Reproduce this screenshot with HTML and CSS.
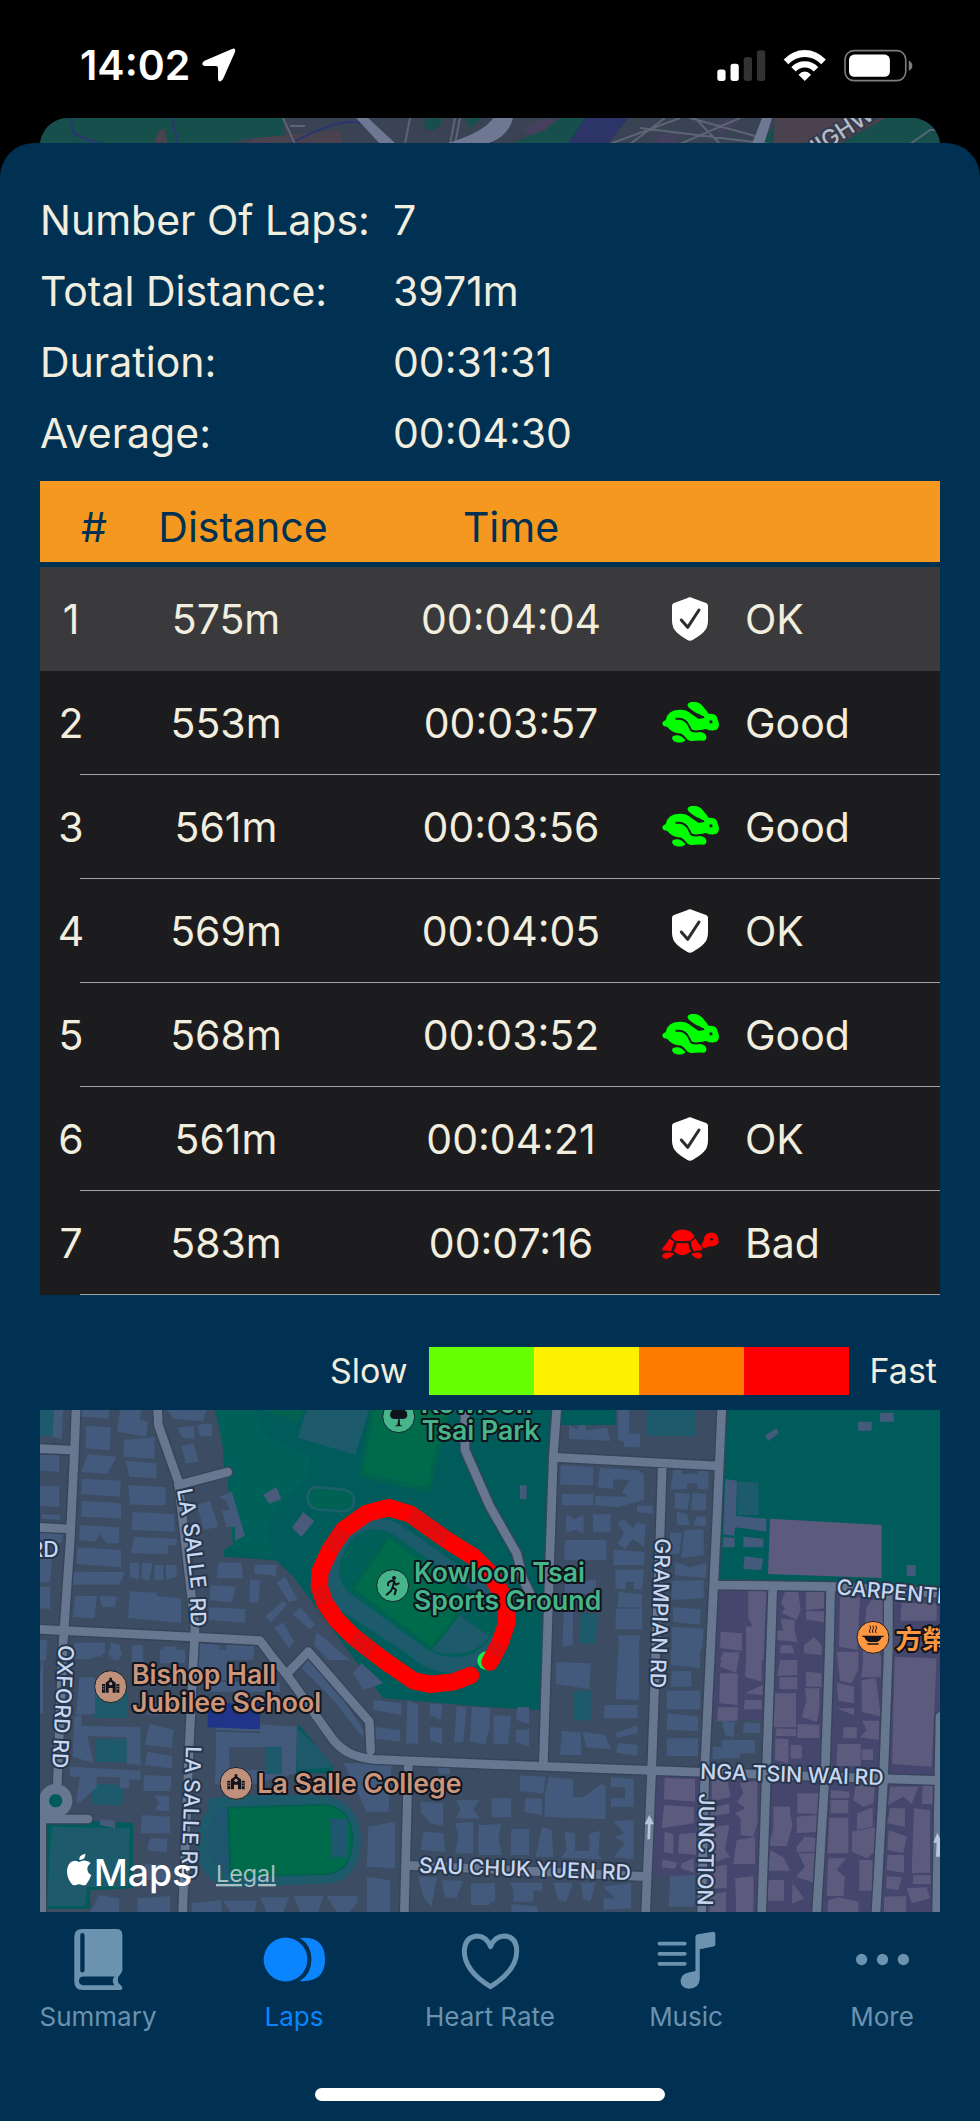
FILE: index.html
```html
<!DOCTYPE html>
<html lang="en">
<head>
<meta charset="utf-8">
<meta name="viewport" content="width=device-width, initial-scale=1">
<title>Laps</title>
<link rel="stylesheet" href="styles.css">
</head>
<body>
<svg class="sprite" aria-hidden="true">
  <symbol id="shield" viewBox="214 112 112 132">
    <path fill="#fff" d="M270 113Q274 113 279 116L318 130Q324 132 324 139V184Q324 206 308 220Q297 230 279 240Q270 246 261 240Q243 230 232 220Q216 206 216 184V139Q216 132 222 130L261 116Q266 113 270 113Z"/>
    <path class="tick" d="M244 181L263 203L297 151"/>
  </symbol>
  <symbol id="hare" viewBox="186 424 176 128">
    <path fill="#0f0" d="M190 488Q190 480 200 478Q206 448 240 447Q262 446 280 460L300 472Q308 474 312 468Q306 462 290 456Q264 440 265 432Q268 423 284 423Q302 424 314 440Q322 450 328 459Q340 458 348 463Q354 468 356 479Q360 486 358 496Q356 508 344 508Q332 510 322 505Q314 502 308 509Q298 512 290 512Q306 512 316 518Q324 526 320 536Q316 541 304 539L276 540Q268 540 264 535Q256 524 246 518Q226 518 212 506Q206 496 196 496Q190 494 190 488Z"/>
    <path fill="#0f0" d="M219 530Q222 522 236 523Q248 524 259 538Q254 545 238 545Q219 543 219 530Z"/>
    <path class="cut" d="M232 474Q252 472 263 485Q270 494 275 507Q280 513 296 511L308 510M264 447L298 471L312 469"/>
    <circle cx="335" cy="483" r="5" fill="#1c1c1e"/>
  </symbol>
  <symbol id="tortoise" viewBox="186 734 176 128">
    <path fill="#f00" d="M216 778Q226 756 250 756Q276 756 286 778L274 790Q250 792 228 790ZM211 783L226 793Q220 806 216 822Q206 818 190 819Q188 814 194 808Q204 798 211 783ZM233 796Q250 799 267 796Q268 812 276 822L260 831Q250 834 240 831L224 822Q231 810 233 796ZM289 782L275 793Q276 810 284 822Q294 818 306 819Q312 814 306 806Q296 796 289 782ZM190 833Q196 824 210 825Q222 826 224 830Q214 842 202 844Q188 842 190 833ZM276 830Q284 824 296 825Q309 826 309 834Q308 844 298 843Q286 842 276 830ZM307 798Q312 796 314 786Q316 766 336 765Q352 766 357 782Q360 798 352 802Q344 808 334 806Q324 806 314 814Q308 808 307 798Z"/>
    <circle cx="337" cy="785" r="4" fill="#1c1c1e"/>
  </symbol>
  <symbol id="school" viewBox="-50 -50 100 100">
    <circle r="48" fill="#c0917a" stroke="#17202c" stroke-width="3"/>
    <path fill="#10131b" d="M-15 18V-12L-4 -20V-27H4V-20L15 -12V18H6V4H-6V18ZM-26 -8H-17V18H-26ZM17 -8H26V18H17Z"/>
    <circle cy="-9" r="5" fill="#c0917a"/>
    <path stroke="#c0917a" stroke-width="3" d="M-24 -1H-19M-24 7H-19M19 -1H24M19 7H24"/>
  </symbol>
</svg>

<header class="status">
  <div class="clock">
    <time>14:02</time>
    <svg class="arrow" viewBox="0 0 34 34" role="img" aria-label="Location in use"><path d="M30 1Q34 -1 33 4L21 31Q17 36 16 31V20Q16 18 14 18H3Q-2 17 2 13Z"/></svg>
  </div>
  <svg class="signals" viewBox="50 36 594 100" role="img" aria-label="Signal, Wi-Fi and battery">
    <rect x="51" y="98" width="25" height="35" rx="8" fill="#fff"/>
    <rect x="91" y="81" width="25" height="52" rx="8" fill="#fff"/>
    <rect x="131" y="60" width="25" height="73" rx="8" fill="#333"/>
    <rect x="171" y="40" width="25" height="93" rx="8" fill="#333"/>
    <path fill="#fff" d="M252 68Q280 39 316 39T380 68L366 82Q344 60 316 60T266 82ZM275 91Q292 73 316 73T357 91L343 104Q332 92 316 92T289 104ZM297 114Q306 104 316 104T335 114L316 133Z"/>
    <rect x="438" y="41" width="184" height="91" rx="27" fill="none" stroke="#7c7c7c" stroke-width="5"/>
    <rect x="450" y="53" width="124" height="67" rx="16" fill="#fff"/>
    <path fill="#7c7c7c" d="M631 71Q642 76 642 87T631 102Z"/>
  </svg>
</header>

<div class="peek">
  <svg viewBox="0 0 900 26" preserveAspectRatio="xMidYMin slice" aria-hidden="true">
    <path fill="#174f4d" d="M0 0H900V26H0Z"/>
    <path fill="#3a4354" d="M243 0H520L505 12 490 18 470 26H190L205 20 245 22ZM590 0H740L720 26H560Z"/>
    <path fill="#174f4d" d="M386 0H402L400 8 392 13 384 10ZM425 0H442L430 10Z"/>
    <path fill="#4a424f" d="M118 14L124 10 128 26H114ZM215 20L300 12 302 26H205ZM735 0H846L820 14 800 26H733Z"/>
    <path fill="#45405e" d="M482 12L500 2 518 0 505 12 490 16ZM620 17L640 14 634 26H615ZM672 8L690 0 695 6 680 16Z"/>
    <path fill="#2c3468" d="M545 0H588L568 26H528Z"/>
    <path fill="none" stroke="#2a3572" stroke-width="2" d="M30 0L34 16 60 26M132 0L138 26M250 26Q290 4 312 4T340 26"/>
    <path fill="none" stroke="#5d6474" stroke-width="2" d="M243 0L255 26M250 8H265M370 0L365 26M415 0L410 26M420 0L415 26M640 0L570 26M655 0L680 26M700 0L640 26M590 26L625 0M600 10L730 26M650 0L715 18M870 26L890 12H900"/>
    <path fill="#6e7892" d="M316 0H328L356 26H340ZM453 0H473Q468 20 446 26H405Q445 14 453 0ZM722 0H732L724 26H712Z"/>
    <text class="peek-road" x="768" y="44" transform="rotate(-33 768 44)">HIGHWAY</text>
  </svg>
</div>

<main class="sheet">
  <dl class="summary">
    <dt>Number Of Laps:</dt><dd>7</dd>
    <dt>Total Distance:</dt><dd>3971m</dd>
    <dt>Duration:</dt><dd>00:31:31</dd>
    <dt>Average:</dt><dd>00:04:30</dd>
  </dl>

  <table class="laps">
    <colgroup><col class="c-num"><col class="c-dist"><col class="c-time"><col class="c-icon"><col></colgroup>
    <thead>
      <tr><th scope="col">#</th><th scope="col">Distance</th><th scope="col">Time</th><th></th><th></th></tr>
    </thead>
    <tbody>
      <tr class="selected"><td>1</td><td>575m</td><td>00:04:04</td><td><svg class="shield"><use href="#shield"/></svg></td><td>OK</td></tr>
      <tr><td>2</td><td>553m</td><td>00:03:57</td><td><svg class="animal"><use href="#hare"/></svg></td><td>Good</td></tr>
      <tr><td>3</td><td>561m</td><td>00:03:56</td><td><svg class="animal"><use href="#hare"/></svg></td><td>Good</td></tr>
      <tr><td>4</td><td>569m</td><td>00:04:05</td><td><svg class="shield"><use href="#shield"/></svg></td><td>OK</td></tr>
      <tr><td>5</td><td>568m</td><td>00:03:52</td><td><svg class="animal"><use href="#hare"/></svg></td><td>Good</td></tr>
      <tr><td>6</td><td>561m</td><td>00:04:21</td><td><svg class="shield"><use href="#shield"/></svg></td><td>OK</td></tr>
      <tr><td>7</td><td>583m</td><td>00:07:16</td><td><svg class="animal"><use href="#tortoise"/></svg></td><td>Bad</td></tr>
    </tbody>
  </table>

  <div class="legend">
    <span>Slow</span>
    <div class="scale"><i class="s1"></i><i class="s2"></i><i class="s3"></i><i class="s4"></i></div>
    <span>Fast</span>
  </div>

  <div class="map">
    <svg viewBox="0 0 2700 1506" role="img" aria-label="Map of the route around Kowloon Tsai Sports Ground">
      <path fill="#3b4c63" d="M0 0H2700V1506H0Z"/>
      <path fill="#45466d" d="M2000 530H2700V1506H1985V1400H1840V1085H2000Z"/>
      <path fill="#3b4c63" d="M2012 930H2190V1082H2012Z"/>
      <!-- parks -->
      <path fill="#005c5a" d="M525 0L548 100 552 170 572 200 615 380 552 420V440L670 448 710 452 760 500 900 690 1030 865 1350 892 1500 900 1520 430 1540 140 1550 0ZM2050 0H2700V545L2040 520ZM1565 0H1727V45H1562Z"/>
      <g transform="translate(-120 -60)">
        <path fill="#00615a" d="M650 60H760L800 140 930 200 925 260 830 350 800 420 820 500 700 480 680 240Z"/>
        <path fill="#00624f" d="M790 60H910L893 96ZM1110 60H1350L1290 308 1077 262Z"/>
        <path fill="#006b4a" d="M1125 60H1335L1280 292 1090 246Z"/>
        <path fill="#1d5a6c" d="M920 60H1106L1066 195 893 143ZM120 60H162V137H120Z"/>
        <path fill="#006252" stroke="#1d5f6b" stroke-width="7" d="M950 291L1035 300Q1062 306 1062 334Q1060 364 1025 364L950 358Q922 350 922 324Q924 292 950 291Z"/>
        <path fill="#1d5a6c" d="M1090 386Q1160 376 1210 410L1540 640Q1560 700 1490 770Q1440 830 1370 850Q1280 850 1220 790L1020 660Q975 610 985 530Q1000 420 1090 386Z"/>
        <path fill="#005f59" d="M1100 420Q1150 410 1190 440L1500 660Q1500 740 1420 790Q1340 820 1270 770L1050 610Q1010 580 1020 520Q1040 440 1100 420Z"/>
        <path fill="#1d5a6c" d="M1370 670L1470 740Q1420 800 1330 790L1290 780Z"/>
        <path fill="#006b4a" stroke="#00614f" stroke-width="10" d="M1165 440L1370 585V680L1294 775 1056 596Z"/>
        <path fill="#4a5a7a" d="M790 314L829 292 844 327 808 341ZM910 366L943 394 904 440 876 413Z"/>
      </g>
      <g transform="translate(-120 720)">
        <path fill="#005c5a" d="M135 515L270 512 399 520 398 715 271 720 270 776H122ZM895 222L1000 350 995 370H885Z"/>
        <path fill="#1d5a6c" d="M155 530L390 535 385 710 262 712 255 768H140ZM280 120H384V204H280ZM287 268H382V336H287ZM275 400L370 406 366 468 273 462ZM795 290H846V372H795ZM888 232L960 300 1000 352 890 360Z"/>
        <path fill="#1d5a6c" d="M625 445Q820 425 990 440Q1083 470 1083 570Q1080 690 985 700L700 712Q590 700 592 580Q594 510 625 480Z"/>
        <path fill="#205570" d="M660 475Q615 530 628 600Q640 660 690 680V480Z"/>
        <path fill="#006b4a" stroke="#00604f" stroke-width="6" d="M684 474L980 464Q1057 480 1057 570Q1055 660 985 672L692 680Z"/>
        <path fill="#1f5770" d="M990 506H1042V622H995Z"/>
      </g>
      <g fill="#1d5a6c">
        <path d="M1820 0H1967V77H1820ZM2092 215L2156 217V315H2092ZM1622 610L1672 612 1668 702 1618 698ZM1602 842H1652V931H1602Z"/>
      </g>
      <!-- buildings, north-west -->
      <g class="blue" transform="translate(-120 -60)">
        <path d="M162 60H190L185 147 158 140ZM246 60H328L326 86 246 80ZM258 107L332 112 330 180 257 175ZM360 60H424L420 90 444 95 438 140 351 125ZM372 150L464 140 463 206 370 200ZM262 193L350 200 322 252 244 246ZM377 212L470 220 469 265 388 260ZM246 266L363 272 360 320 244 312ZM384 285L497 292V346L390 344ZM245 332L363 340V385L244 380ZM397 366L523 372V425L396 420ZM240 405L358 412 356 460H320L298 432 288 455 238 450ZM403 440L530 446V465H505L502 492L392 490ZM232 472L363 480V532L230 522ZM218 545L376 546 358 584H218ZM390 518H417V570L390 562ZM426 518L457 520 448 572 424 565ZM464 525H490V570H462ZM498 525H530V560L498 570ZM390 604L470 608V618L543 625V698L384 684ZM226 617L291 618 284 685 218 680ZM298 617L351 620 344 652 305 650ZM120 195H178V247L120 241ZM120 288H178V352L120 347ZM126 372L180 375V390L126 386ZM120 425L190 430 185 460H120ZM120 506H157L150 577H120ZM120 590H151V658L120 655ZM502 60H620L610 94 520 86ZM532 112L583 108V147L548 145ZM592 104L637 100 635 138 600 137ZM543 168L580 160 596 215 558 220ZM590 344L630 332 655 410 612 420ZM658 320L695 305 735 437 705 452V410L680 412 665 362 690 360 680 334ZM655 518H724L730 565H650ZM764 524H830L828 558 762 550ZM750 568L782 572 774 640 748 636ZM632 585L708 590 695 638 630 630ZM626 652L736 657V698L624 690ZM830 578L855 560 893 630 866 636ZM797 678L850 632 860 645 812 698ZM878 672L902 652 946 705 928 718ZM823 712L850 697 882 755 866 775ZM222 758H315V790L270 808H222ZM330 758L362 765 358 810H335ZM396 765H428V810H400ZM490 770H530V810H488ZM595 760L660 765 650 810H600ZM680 765L764 758 760 810H670ZM950 725L1050 810H985L942 765ZM120 750H143L138 810H120Z"/>
      </g>
      <!-- buildings, north-east -->
      <g class="blue" transform="translate(1350 -60)">
        <path d="M384 60H417V130L450 132V172L402 170V155L384 150ZM237 106L264 118V106H288V122L350 112 362 153 237 146ZM212 226L309 232V286L210 284ZM330 233L440 240 462 252V330L380 352 316 345V318L415 320 395 306 420 270 370 268V298L323 292ZM216 312H310V346H216ZM441 346L488 348V372L441 366ZM228 373L255 388 281 373V432L258 420 228 427ZM309 373H362V427H309ZM382 400L400 388 430 415 440 398 468 402 462 470 428 446 406 476 382 462 402 428ZM225 450H349V510H222ZM370 478L463 486V525H370ZM376 540L462 538 456 598H432V576H407V600L376 595ZM385 606L456 612V652H384ZM378 656H457V718H376ZM384 736H450L444 800H388ZM225 575L318 570V600L285 612 250 616 248 765 217 770ZM550 236H575V252H622V236H655V298H622V280H592V298H542ZM555 308L600 312 592 360 555 355ZM608 308L648 312V360H602ZM560 366L590 372 600 405 562 405ZM620 378L648 380V410L610 404ZM540 426L575 430 568 492H538ZM582 420L641 418V496L575 504ZM555 515L600 532 648 518V564L555 556ZM548 572L641 570V625L543 630ZM548 652L633 658 630 704 550 696ZM545 710L641 716 635 780H545ZM90 286H110V327H90ZM826 136L860 115 866 130 834 154ZM1104 95H1145V122H1104ZM1170 68H1211V95H1170ZM706 267L741 272 738 378 829 386V425L736 412 732 437 700 433ZM700 440L734 445V472H698ZM760 440L820 446V472H760ZM764 498L820 506 814 540 760 537ZM1250 525H1277V558H1250Z"/>
      </g>
      <g class="plum" transform="translate(1350 -60)">
        <path d="M840 386L1175 405V564L834 552ZM775 598H830L826 672 820 810H768V710L788 708 775 685ZM692 725L756 730V782L690 774ZM698 790L748 785 745 810H690ZM885 606H925L932 660 920 690 875 668 885 655 873 640ZM948 606H1002V655L948 660ZM948 664H1002V697L948 688ZM872 686L914 690V722L922 756 862 750V722H880ZM972 742L995 765V795L942 790V766ZM872 766H905L914 790H870ZM1050 622H1110L1102 780 1047 770ZM1130 650L1145 630H1180V720L1125 700ZM1234 640H1340V692H1232ZM1120 740H1170V810H1118Z"/>
      </g>
      <!-- buildings, south-west -->
      <g class="blue" transform="translate(-120 720)">
        <path d="M120 70L130 0V190H120ZM225 0H310L305 20 230 15ZM238 82H285V192L228 195ZM222 200L245 195V228L422 232V345L380 342V262L262 258 282 340 218 320ZM210 350L422 362V390L388 388V415H360V382L290 380V412L235 462 228 455 240 380H210ZM325 0H365V20H325ZM395 0H430V35L395 50ZM480 0H555V40H480ZM620 95L840 98V125H625ZM440 160H530V195H440ZM448 222L522 240 515 294 435 284ZM442 305L516 318V356L434 345ZM432 375L515 378 510 423H430ZM462 436L508 438V484L462 480 478 460ZM425 495L510 500V550H422ZM455 564L503 566 500 608 442 600 445 575ZM435 640L503 650V690H430ZM412 745L510 738V788H412ZM298 735L358 745V786H270ZM300 508L346 512 345 534 300 526ZM600 285H648V215L890 230 888 370 690 420 645 400 648 285ZM580 0H680V90H580Z"/>
        <path fill="#3b4c63" d="M688 292H795V360H688ZM614 238L780 244V250L614 244Z"/>
        <path fill="#20348a" d="M623 160H780V238L623 232Z"/>
        <path fill="#1d5a6c" d="M795 290H846V372H795Z"/>
        <path d="M1085 40L1150 100 1090 120 1060 70ZM925 30L985 80 1030 150 1090 240V265L1000 150 905 55ZM1030 338L1175 345 1165 485H1100ZM1120 150L1205 160V195L1120 180ZM1125 230L1200 240V275L1110 265ZM1222 150L1255 165V280L1218 282ZM1290 160L1328 165 1322 210 1290 195ZM1290 230L1326 235V282L1290 270ZM1370 168L1400 172 1390 275 1362 278ZM1415 170L1470 175V230L1455 282 1410 275ZM1105 530L1185 515V655L1100 650ZM1100 680L1170 690V786H1100ZM1262 455L1330 460V528L1290 520 1262 485ZM1368 450H1438L1420 478 1440 505H1368L1382 478ZM1270 545L1330 550 1336 605 1262 600ZM1365 520L1420 516V608L1365 612 1375 560ZM1435 525H1470V615H1435ZM1255 680H1310L1295 770 1270 740ZM1325 690L1388 692 1370 745 1335 740ZM1412 700H1470V765H1412ZM575 760L665 750V786H575ZM670 752H770L765 786H690ZM780 742H868L850 786H800ZM880 738H970L955 786H900ZM980 738H1073V755L1050 786H1010ZM1315 345H1350V372H1315Z"/>
      </g>
      <!-- buildings, south-east -->
      <g class="blue" transform="translate(1350 720)">
        <path d="M10 196L63 198 55 282H10ZM82 170L117 172V222L78 210ZM78 240L117 238V290L76 275ZM198 37L303 40 298 118 197 102ZM385 0H448V150L376 148ZM344 165H443V204H342ZM216 242L272 248 275 316 210 314ZM278 245L345 255 364 298 288 292ZM376 250L443 225V250L380 264ZM384 278L443 285V318L378 308ZM543 0H630V55L543 45ZM545 63H604V110H543ZM530 122H630V178H530ZM532 190L624 200V243L530 240ZM530 265H624V318H530ZM695 212L735 215 730 262 705 255ZM765 216L810 220V250L757 248ZM695 270H795V310H750V325H695ZM668 290H694V328H668ZM90 376L167 380 160 430 90 424ZM176 380L249 388V440L280 442 335 402 347 410V508L163 500 165 430ZM5 445H63V502H5ZM108 444L156 446V495L102 485ZM363 382L431 388V470H363V445H405V412H363ZM0 523H36L25 560 36 615H0ZM64 537H117V615H62ZM156 530L185 540 190 622 137 620ZM223 543L256 550V603H298V550L330 543 325 610 334 628 212 624 230 600ZM370 512L431 510V628L370 622 405 578 372 562 402 550ZM60 698H156V722H130V755H70V720ZM190 698H250L228 755 205 750ZM272 698H316L302 755 280 748ZM338 710L423 698V775L340 780V745H375ZM64 762L142 770V786H64ZM0 698H15V755H0ZM540 678L615 675V770H536Z"/>
      </g>
      <g class="plum" transform="translate(1350 720)">
        <path d="M700 5L748 12 738 68 690 50ZM770 0H815V95L765 80ZM690 70H743V165L688 160ZM765 130L818 104V136ZM764 150H815V178H762ZM684 172H743V212H682ZM870 30H922V75L862 78ZM868 82H922V118H868ZM948 65L995 70V110H948ZM945 115H988V180L980 216 935 200 950 150ZM855 130H918V232H850ZM860 235L918 238V258H856ZM922 222L988 225V264H922ZM856 265L895 268V340L855 330ZM902 285H935V326H902ZM1040 5H1105V60L1085 100 1050 92ZM1120 30L1173 15V82H1113ZM1040 98L1092 110V160L1045 152ZM1115 90L1158 85 1172 200 1115 185ZM1040 175H1092V196ZM1060 232H1100V265H1060ZM1116 212H1167V270L1110 262 1130 240ZM1042 282H1112V348H1040ZM1115 298H1149V330H1115ZM1214 20L1340 25 1325 350 1206 342ZM524 384L615 388V455L522 448ZM522 465L612 472V520L515 535ZM524 545L550 552V612L522 605ZM568 552L618 548V615L564 610ZM518 628L562 638 555 656 515 652ZM575 640L612 625V668L572 655ZM665 390H712L722 440 665 455ZM750 400L802 392V520L790 560 752 555V505L735 490 765 475 742 455 760 430ZM665 475L718 460V490L660 500ZM665 530L718 525 705 600 720 620 665 640ZM740 570L795 562V642H730ZM670 650L710 645V715H670ZM735 685L790 678V786H738V745ZM660 735L708 725V786H658ZM850 470H900V490L908 525 890 588H835L850 540ZM922 430H988V492L922 490ZM920 500L980 495 985 545 920 550ZM945 560L988 565V605H920V590ZM840 600L880 622 900 662H835ZM925 610H975V700L918 680 945 650ZM835 690H882V752H832ZM908 700L942 745 905 762ZM1022 420L1078 425V445H1022ZM1022 450H1075V490H1022ZM1018 503H1075V610H1012ZM1098 402L1154 410 1150 460 1120 470 1090 450ZM1102 490L1148 472V530L1100 540ZM1086 545L1160 530 1155 605 1130 625 1086 605ZM1015 625H1068L1040 660 1065 680 1060 738H1010ZM1108 630H1148V722H1108ZM1015 750L1045 742 1105 755V786H1012ZM1200 410H1285L1265 462 1240 440 1195 465ZM1298 402H1328V462H1296ZM1200 475H1245V530L1192 520ZM1272 475L1320 480V668L1265 670ZM1196 540L1250 560 1240 608 1192 600ZM1192 615H1242V668L1190 660ZM1270 676H1322V702H1268ZM1190 678L1235 682 1225 720 1188 715ZM1250 715L1310 712 1320 745 1265 760ZM1182 740L1248 738V786H1182Z"/>
      </g>
      <!-- streets -->
      <g class="street-edge">
        <path id="streets" d="M108 0L103 130 90 400 68 720 52 1120M0 116L95 120M0 352L90 357M0 658L400 678 660 692 700 745 745 800 880 990Q905 1018 930 1030T1000 1048L1350 1063 1850 1082 2350 1100 2700 1112M353 0L355 45 415 215 465 650 448 1000 428 1506M415 225L563 186M745 787L805 725 988 935 992 1022M1275 0V120L1350 290 1430 430 1450 510 1475 560M1550 0L1540 140 1530 430 1510 1060M1545 142L2035 168M1867 160L1860 380 1835 1080 1817 1506M2045 0L2030 340 1995 1060 1985 1506M2025 525L2380 530 2700 550M2198 540L2192 720 2165 1506M2372 530L2368 720 2355 1100 2330 1506M2545 560V720L2530 1120 2508 1506M2700 920L2690 1506M1105 1060L1093 1506M1100 1366L1820 1400M5 1180V1506M20 1227H144"/>
      </g>
      <use class="street" href="#streets"/>
      <circle cx="47" cy="1172" r="35" class="roundabout"/>
      <path fill="#b9c6dc" d="M1828 1215L1842 1243H1832L1830 1288H1822L1824 1243H1814ZM2692 1268L2700 1285V1340H2688L2690 1298H2680Z"/>
      <!-- recorded route -->
      <circle cx="1340" cy="752" r="28" fill="#1ee850"/>
      <path class="route" d="M1292 796L1240 816 1170 823 1120 812 1030 750 940 680 890 630 855 580 838 530 840 485 870 420 910 360 980 310 1045 293 1110 312 1220 390 1300 440 1350 490 1385 550 1400 600V640L1380 700 1350 756"/>
      <path class="route-shade" d="M870 420L910 360M1110 312L1220 390M855 580L838 530M940 680L1000 726M1380 700L1362 734"/>
      <!-- street names -->
      <g class="street-name">
        <text transform="translate(410 240) rotate(79)">LA</text>
        <text transform="translate(430 342) rotate(83)">SALLE</text>
        <text transform="translate(450 563) rotate(88)">RD</text>
        <text transform="translate(438 1008) rotate(92)">LA SALLE RD</text>
        <text transform="translate(56 704) rotate(93)">OXFORD RD</text>
        <text x="56" y="440" text-anchor="end">RD</text>
        <text transform="translate(1846 384) rotate(92)">GRAMPIAN RD</text>
        <text transform="translate(1978 1150) rotate(91)">JUNCTION</text>
        <text transform="translate(1980 1106) rotate(2)">NGA TSIN WAI RD</text>
        <text transform="translate(1136 1388) rotate(2)">SAU CHUK YUEN RD</text>
        <text transform="translate(2388 553) rotate(5)">CARPENTER RD</text>
      </g>
      <!-- places -->
      <g class="place park">
        <circle cx="1076" cy="20" r="48"/>
        <path class="glyph" d="M1072 46L1075 26Q1050 30 1050 14Q1050 4 1058 0H1094Q1102 4 1102 14Q1102 30 1079 26L1080 46H1086V49H1066V46Z"/>
        <text x="1142" y="10">Kowloon</text>
        <text x="1145" y="91">Tsai Park</text>
        <circle cx="1058" cy="527" r="48"/>
        <circle class="glyph" cx="1062" cy="504" r="6"/>
        <path class="runner" d="M1045 518L1054 512 1063 514 1058 532 1068 540 1064 553M1062 516L1068 524 1076 520M1058 532L1052 544 1040 554M1045 518L1044 526"/>
        <text x="1122" y="516">Kowloon Tsai</text>
        <text x="1122" y="599">Sports Ground</text>
      </g>
      <g class="place edu">
        <use href="#school" x="162" y="780" width="100" height="100"/>
        <text x="276" y="822">Bishop Hall</text>
        <text x="276" y="905">Jubilee School</text>
        <use href="#school" x="538" y="1070" width="100" height="100"/>
        <text x="652" y="1150">La Salle College</text>
      </g>
      <g class="place food">
        <circle cx="2499" cy="682" r="48"/>
        <path class="glyph" d="M2467 677H2531V681H2525Q2520 694 2510 696H2488Q2478 694 2473 681H2467ZM2482 700H2516V704H2482Z"/>
        <path class="steam" d="M2490 668Q2486 662 2490 658T2490 648M2499 668Q2495 662 2499 658T2499 648M2508 668Q2504 662 2508 658T2508 648"/>
        <text class="cjk" x="2566" y="718">方榮</text>
      </g>
      <!-- attribution -->
      <path fill="#fff" d="M118 1350Q116 1335 136 1331Q138 1348 118 1350ZM117 1356Q127 1350 137 1352Q146 1352 152 1360Q142 1367 142 1378Q143 1390 154 1395Q148 1412 138 1424Q132 1428 124 1424Q116 1421 108 1425Q100 1429 92 1418Q78 1398 82 1374Q88 1352 106 1352Q112 1353 117 1356Z"/>
      <text class="brand" x="161" y="1427">Maps</text>
      <a href="#legal"><text class="legal" x="528" y="1416">Legal</text></a>
    </svg>
  </div>

  <nav class="tabs" aria-label="Sections">
    <a href="#summary">
      <svg viewBox="218 54 152 190" class="book"><path fill-rule="evenodd" d="M245 57H348Q366 57 366 75V180Q366 186 361 192Q352 200 352 212Q352 220 361 227Q366 231 366 235Q366 241 360 241H246Q221 241 221 216V80Q221 57 245 57ZM245 69Q239 69 239 75V182Q239 188 245 188T252 182V75Q252 69 245 69ZM250 200Q235 200 235 213T250 227H342Q332 213 342 200Z"/></svg>
      <span>Summary</span>
    </a>
    <a href="#laps" class="active" aria-current="page">
      <svg viewBox="786 54 188 190" class="wide"><circle cx="853" cy="149" r="66"/><path d="M896 84Q972 78 972 149Q972 218 896 214Q931 194 931 149T896 84Z"/></svg>
      <span>Laps</span>
    </a>
    <a href="#heart">
      <svg viewBox="-6 54 190 190" class="wide"><path class="line" d="M89 231Q10 182 10 124Q12 80 50 78Q78 80 89 110Q100 80 130 78Q168 80 168 124Q168 182 89 231Z"/></svg>
      <span>Heart Rate</span>
    </a>
    <a href="#music">
      <svg viewBox="494 54 188 190" class="wide"><path class="bars" d="M506 101H583M506 132H583M506 162H583"/><path d="M615 80Q615 74 622 73L668 65Q675 65 675 72V104Q675 108 669 110L628 118V208Q626 237 595 237Q570 235 570 212Q572 192 595 188L615 184Z"/></svg>
      <span>Music</span>
    </a>
    <a href="#more">
      <svg viewBox="1080 54 190 190" class="wide"><circle cx="1112" cy="149" r="17"/><circle cx="1175" cy="149" r="17"/><circle cx="1238" cy="149" r="17"/></svg>
      <span>More</span>
    </a>
  </nav>
  <div class="home"></div>
</main>
</body>
</html>
```
FILE: styles.css
```css
* { box-sizing: border-box; }

body {
  margin: 0;
  background: #000;
  color: #f2eedf;
  font-family: Inter, "Liberation Sans", sans-serif;
  font-size: 41px;
}

.sprite { position: absolute; width: 0; height: 0; }
svg { display: block; }

.status {
  display: flex;
  justify-content: space-between;
  align-items: center;
  height: 118px;
  padding: 12px 66px 0 80px;
  color: #fff;
}
.clock {
  display: flex;
  align-items: center;
  gap: 12px;
  font-weight: 600;
}
.arrow { width: 34px; height: 34px; fill: #fff; }
.signals { width: 198px; height: 33px; }

.peek {
  height: 80px;
  margin: 0 40px -55px;
  border-radius: 28px 28px 0 0;
  overflow: hidden;
  background: #174f4d;
}
.peek svg { width: 100%; }
.peek-road { font-size: 23px; font-weight: 500; fill: #b4bac6; stroke: #333b4b; stroke-width: 4px; paint-order: stroke; }

.sheet {
  position: relative;
  padding: 41px 40px 20px;
  border-radius: 34px 34px 0 0;
  background: #003153;
}

.summary {
  display: grid;
  grid-template-columns: 353px 1fr;
  grid-auto-rows: 71px;
  align-items: center;
  margin: 0 0 13px;
}
.summary dd { margin: 0; }

.laps {
  width: 100%;
  table-layout: fixed;
  border-spacing: 0;
}
.c-num { width: 62px; }
.c-dist { width: 248px; }
.c-time { width: 300px; }
.c-icon { width: 80px; }
.laps th, .laps td { padding: 0; text-align: center; font-weight: 400; }
.laps th {
  height: 86px;
  padding-top: 10px;
  border-bottom: 5px solid #003153;
  background: #f4981f;
  color: #003153;
}
.laps th:first-child { padding-left: 41px; text-align: left; }
.laps th:nth-child(2) { padding-left: 34px; }
.laps th:nth-child(3), .laps td:nth-child(3) { padding-left: 22px; }
.laps td { height: 104px; }
.laps td:last-child { padding-left: 15px; text-align: left; }
.laps tbody tr {
  background: linear-gradient(#a2a2a6, #a2a2a6) no-repeat 40px bottom / 100% 1px #1c1c1e;
}
.laps tbody .selected { background: #3a3a3c; }
.laps svg { margin: 0 auto; }
.shield { width: 38px; height: 44px; }
.animal { width: 59px; height: 43px; }
.tick { fill: none; stroke: #2c2c2e; stroke-width: 9; stroke-linecap: round; stroke-linejoin: round; }
.cut { fill: none; stroke: #1c1c1e; stroke-width: 6; stroke-linecap: round; stroke-linejoin: round; }

.legend {
  display: flex;
  justify-content: flex-end;
  align-items: center;
  gap: 21px;
  margin: 52px 3px 15px 0;
  font-size: 34px;
  line-height: 46px;
}
.scale { display: grid; grid-template-columns: repeat(4, 1fr); width: 420px; height: 48px; }
.s1 { background: #65ff00; }
.s2 { background: #fff200; }
.s3 { background: #ff7b00; }
.s4 { background: #f00; }

.map svg { width: 100%; height: auto; overflow: hidden; }
.blue { fill: #435a7c; }
.plum { fill: #5d5b7d; }
.street-edge, .street { fill: none; stroke-linecap: round; stroke-linejoin: round; }
.street-edge { stroke: #35445a; stroke-width: 34px; }
.street { stroke: #66778f; stroke-width: 26px; }
.roundabout { fill: #005c5a; stroke: #66778f; stroke-width: 30px; }
.route, .route-shade { fill: none; stroke: #f00; stroke-width: 52px; stroke-linecap: round; stroke-linejoin: round; }
.route-shade { stroke: #e30b0b; stroke-width: 48px; stroke-linecap: butt; }
.street-name {
  font-size: 64px;
  font-weight: 500;
  fill: #c8d6f0;
  stroke: #26364c;
  stroke-width: 12px;
  stroke-linejoin: round;
  paint-order: stroke;
}
.place text {
  font-size: 80px;
  font-weight: 600;
  stroke: #10131b;
  stroke-width: 12px;
  stroke-linejoin: round;
  paint-order: stroke;
}
.place > circle { stroke: #17202c; stroke-width: 3px; }
.park { fill: #46b68a; }
.edu { fill: #cb967b; }
.food { fill: #ff9640; }
.place .glyph { fill: #10131b; stroke: none; }
.runner, .steam { fill: none; stroke: #10131b; stroke-width: 6px; stroke-linecap: round; stroke-linejoin: round; }
.steam { stroke-width: 3px; }
.place .cjk { font-family: "Noto Sans CJK TC", sans-serif; font-weight: 700; }
.brand { font-size: 112px; font-weight: 500; fill: #fff; }
.legal { font-size: 70px; fill: #a9bfc4; text-decoration: underline; }

.tabs {
  display: grid;
  grid-template-columns: repeat(5, 1fr);
  margin: 0 -40px;
  padding-top: 16px;
}
.tabs a {
  display: flex;
  flex-direction: column;
  align-items: center;
  gap: 10px;
  color: #6b92ae;
  font-size: 26px;
  line-height: 32px;
  text-decoration: none;
}
.tabs .active { color: #0b84ff; }
.tabs svg { height: 63px; fill: currentColor; }
.book { width: 51px; }
.wide { width: 63px; }
.tabs .line { fill: none; stroke: currentColor; stroke-width: 15; stroke-linejoin: round; }
.bars { stroke: currentColor; stroke-width: 11; stroke-linecap: round; }

.home {
  width: 350px;
  height: 13px;
  margin: 55px auto 0;
  border-radius: 7px;
  background: #fff;
}
```
